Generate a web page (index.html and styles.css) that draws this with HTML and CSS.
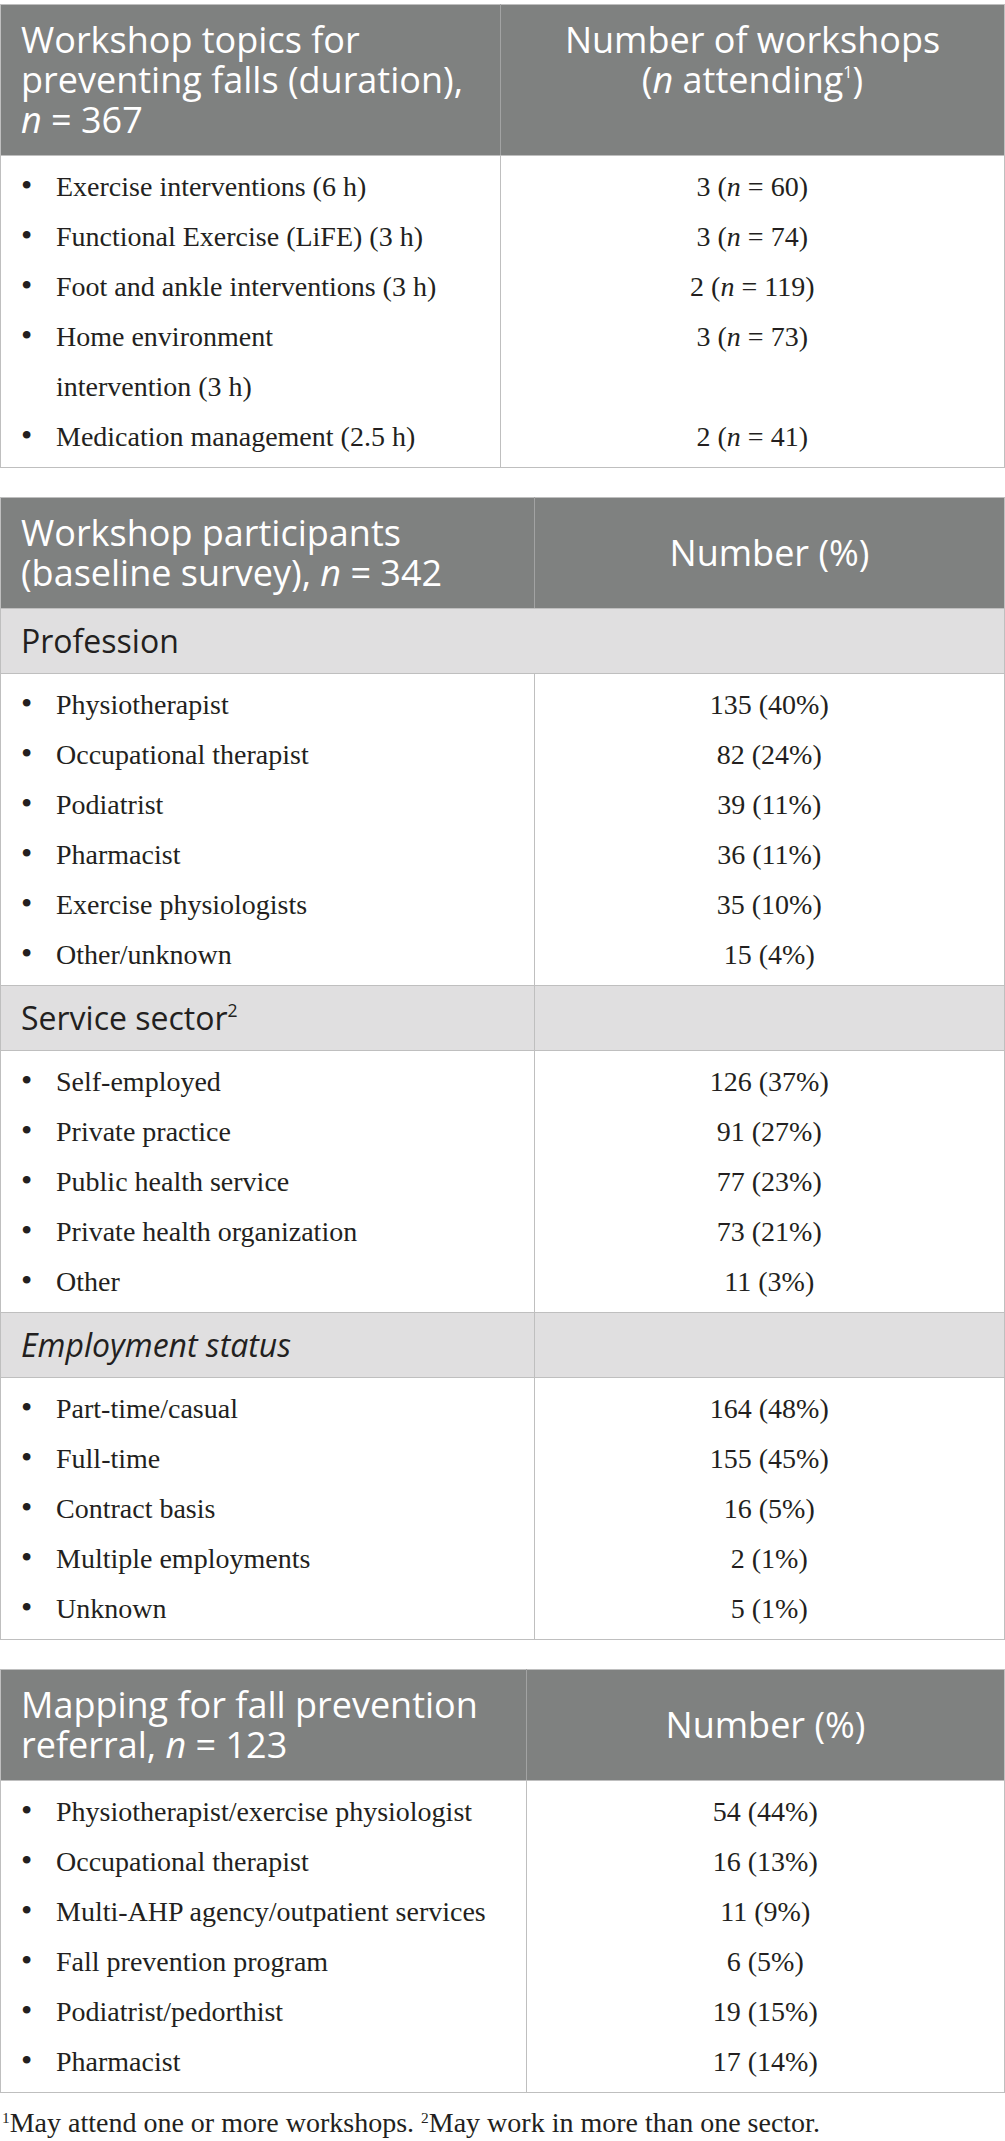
FILE: index.html
```html
<!DOCTYPE html>
<html lang="en">
<head>
    <meta charset="UTF-8">
    <meta name="viewport" content="width=device-width, initial-scale=1.0">
    <title>Fall prevention workshops</title>
    <link rel="stylesheet" href="styles.css">
</head>
<body>
    <div class="page">
        <!-- workshop topics -->
        <table class="data">
            <colgroup><col class="col-w500"><col></colgroup>
            <thead>
                <tr>
                    <th>Workshop topics for preventing falls (duration), <i>n</i>&nbsp;=&nbsp;367</th>
                    <th class="num top">Number of workshops<br>(<i>n</i> attending<sup>1</sup>)</th>
                </tr>
            </thead>
            <tbody class="items">
                <tr><td class="label">Exercise interventions (6 h)</td><td class="value">3 (<i>n</i> = 60)</td></tr>
                <tr><td class="label">Functional Exercise (LiFE) (3 h)</td><td class="value">3 (<i>n</i> = 74)</td></tr>
                <tr><td class="label">Foot and ankle interventions (3 h)</td><td class="value">2 (<i>n</i> = 119)</td></tr>
                <tr><td class="label">Home environment<br>intervention (3 h)</td><td class="value">3 (<i>n</i> = 73)</td></tr>
                <tr><td class="label">Medication management (2.5 h)</td><td class="value">2 (<i>n</i> = 41)</td></tr>
            </tbody>
        </table>

        <!-- participants -->
        <table class="data">
            <colgroup><col class="col-w534"><col></colgroup>
            <thead>
                <tr>
                    <th>Workshop participants<br>(baseline survey), <i>n</i> = 342</th>
                    <th class="num">Number (%)</th>
                </tr>
            </thead>
            <tbody class="section">
                <tr><td colspan="2">Profession</td></tr>
            </tbody>
            <tbody class="items">
                <tr><td class="label">Physiotherapist</td><td class="value">135 (40%)</td></tr>
                <tr><td class="label">Occupational therapist</td><td class="value">82 (24%)</td></tr>
                <tr><td class="label">Podiatrist</td><td class="value">39 (11%)</td></tr>
                <tr><td class="label">Pharmacist</td><td class="value">36 (11%)</td></tr>
                <tr><td class="label">Exercise physiologists</td><td class="value">35 (10%)</td></tr>
                <tr><td class="label">Other/unknown</td><td class="value">15 (4%)</td></tr>
            </tbody>
            <tbody class="section">
                <tr><td class="split">Service sector<sup>2</sup></td><td></td></tr>
            </tbody>
            <tbody class="items">
                <tr><td class="label">Self-employed</td><td class="value">126 (37%)</td></tr>
                <tr><td class="label">Private practice</td><td class="value">91 (27%)</td></tr>
                <tr><td class="label">Public health service</td><td class="value">77 (23%)</td></tr>
                <tr><td class="label">Private health organization</td><td class="value">73 (21%)</td></tr>
                <tr><td class="label">Other</td><td class="value">11 (3%)</td></tr>
            </tbody>
            <tbody class="section">
                <tr><td class="split"><i>Employment status</i></td><td></td></tr>
            </tbody>
            <tbody class="items">
                <tr><td class="label">Part-time/casual</td><td class="value">164 (48%)</td></tr>
                <tr><td class="label">Full-time</td><td class="value">155 (45%)</td></tr>
                <tr><td class="label">Contract basis</td><td class="value">16 (5%)</td></tr>
                <tr><td class="label">Multiple employments</td><td class="value">2 (1%)</td></tr>
                <tr><td class="label">Unknown</td><td class="value">5 (1%)</td></tr>
            </tbody>
        </table>

        <!-- referral mapping -->
        <table class="data">
            <colgroup><col class="col-w526"><col></colgroup>
            <thead>
                <tr>
                    <th>Mapping for fall prevention<br>referral, <i>n</i> = 123</th>
                    <th class="num">Number (%)</th>
                </tr>
            </thead>
            <tbody class="items">
                <tr><td class="label">Physiotherapist/exercise physiologist</td><td class="value">54 (44%)</td></tr>
                <tr><td class="label">Occupational therapist</td><td class="value">16 (13%)</td></tr>
                <tr><td class="label">Multi-AHP agency/outpatient services</td><td class="value">11 (9%)</td></tr>
                <tr><td class="label">Fall prevention program</td><td class="value">6 (5%)</td></tr>
                <tr><td class="label">Podiatrist/pedorthist</td><td class="value">19 (15%)</td></tr>
                <tr><td class="label">Pharmacist</td><td class="value">17 (14%)</td></tr>
            </tbody>
        </table>

        <p class="footnote"><sup>1</sup>May attend one or more workshops. <sup>2</sup>May work in more than one sector.</p>
    </div>
</body>
</html>
```

FILE: styles.css
```css
:root {
    --head-bg: #7f8180;
    --section-bg: #e0dfe0;
    --line: #bfbfbf;
    --head-line: #a2a3a3;
    --text: #231f20;
}

* {
    margin: 0;
    padding: 0;
    box-sizing: border-box;
}

body {
    background: #fff;
    color: var(--text);
    font-family: "Liberation Serif", "Times New Roman", serif;
}

.page {
    padding-top: 4px;
}

/* tables */
.data {
    width: 100%;
    border-collapse: collapse;
    table-layout: fixed;
    border: 1px solid var(--line);
    margin-bottom: 29px;
}

.col-w500 { width: 500px; }
.col-w534 { width: 534px; }
.col-w526 { width: 526px; }

.data th {
    background: var(--head-bg);
    color: #fff;
    font-family: "Open Sans", "Noto Sans", sans-serif;
    font-weight: 400;
    font-size: 36px;
    line-height: 40px;
    text-align: left;
    vertical-align: middle;
    padding: 15px 20px;
    border-bottom: 1px solid var(--line);
}

.data th:first-child {
    border-right: 1px solid var(--head-line);
}

.data th.num {
    text-align: center;
}

.data th.top {
    vertical-align: top;
}

.data th sup {
    font-size: 0.45em;
    line-height: 0;
    vertical-align: 0.95em;
}

/* grey group rows */
.section td {
    background: var(--section-bg);
    font-family: "Open Sans", "Noto Sans", sans-serif;
    font-size: 32px;
    line-height: 40px;
    padding: 12px 20px;
    border-top: 1px solid var(--line);
    border-bottom: 1px solid var(--line);
}

.section td.split {
    border-right: 1px solid var(--line);
}

.section sup {
    font-size: 0.55em;
    line-height: 0;
    vertical-align: 0.75em;
}

/* item rows */
.items td {
    font-size: 28px;
    line-height: 50px;
    vertical-align: top;
}

.items tr:first-child td {
    padding-top: 6px;
}

.items tr:last-child td {
    padding-bottom: 5px;
}

.items td.label {
    display: flex;
    align-items: baseline;
    padding-left: 20px;
    padding-right: 10px;
    border-right: 1px solid var(--line);
}

.items td.label::before {
    content: "\2022";
    flex: 0 0 35px;
    font-size: 1.15em;
    line-height: 1;
}

.items td.value {
    text-align: center;
}

.footnote {
    margin-top: -15px;
    padding-left: 2px;
    font-size: 28px;
    line-height: 32px;
}

.footnote sup {
    font-size: 0.55em;
    line-height: 0;
    vertical-align: 0.6em;
}
```
